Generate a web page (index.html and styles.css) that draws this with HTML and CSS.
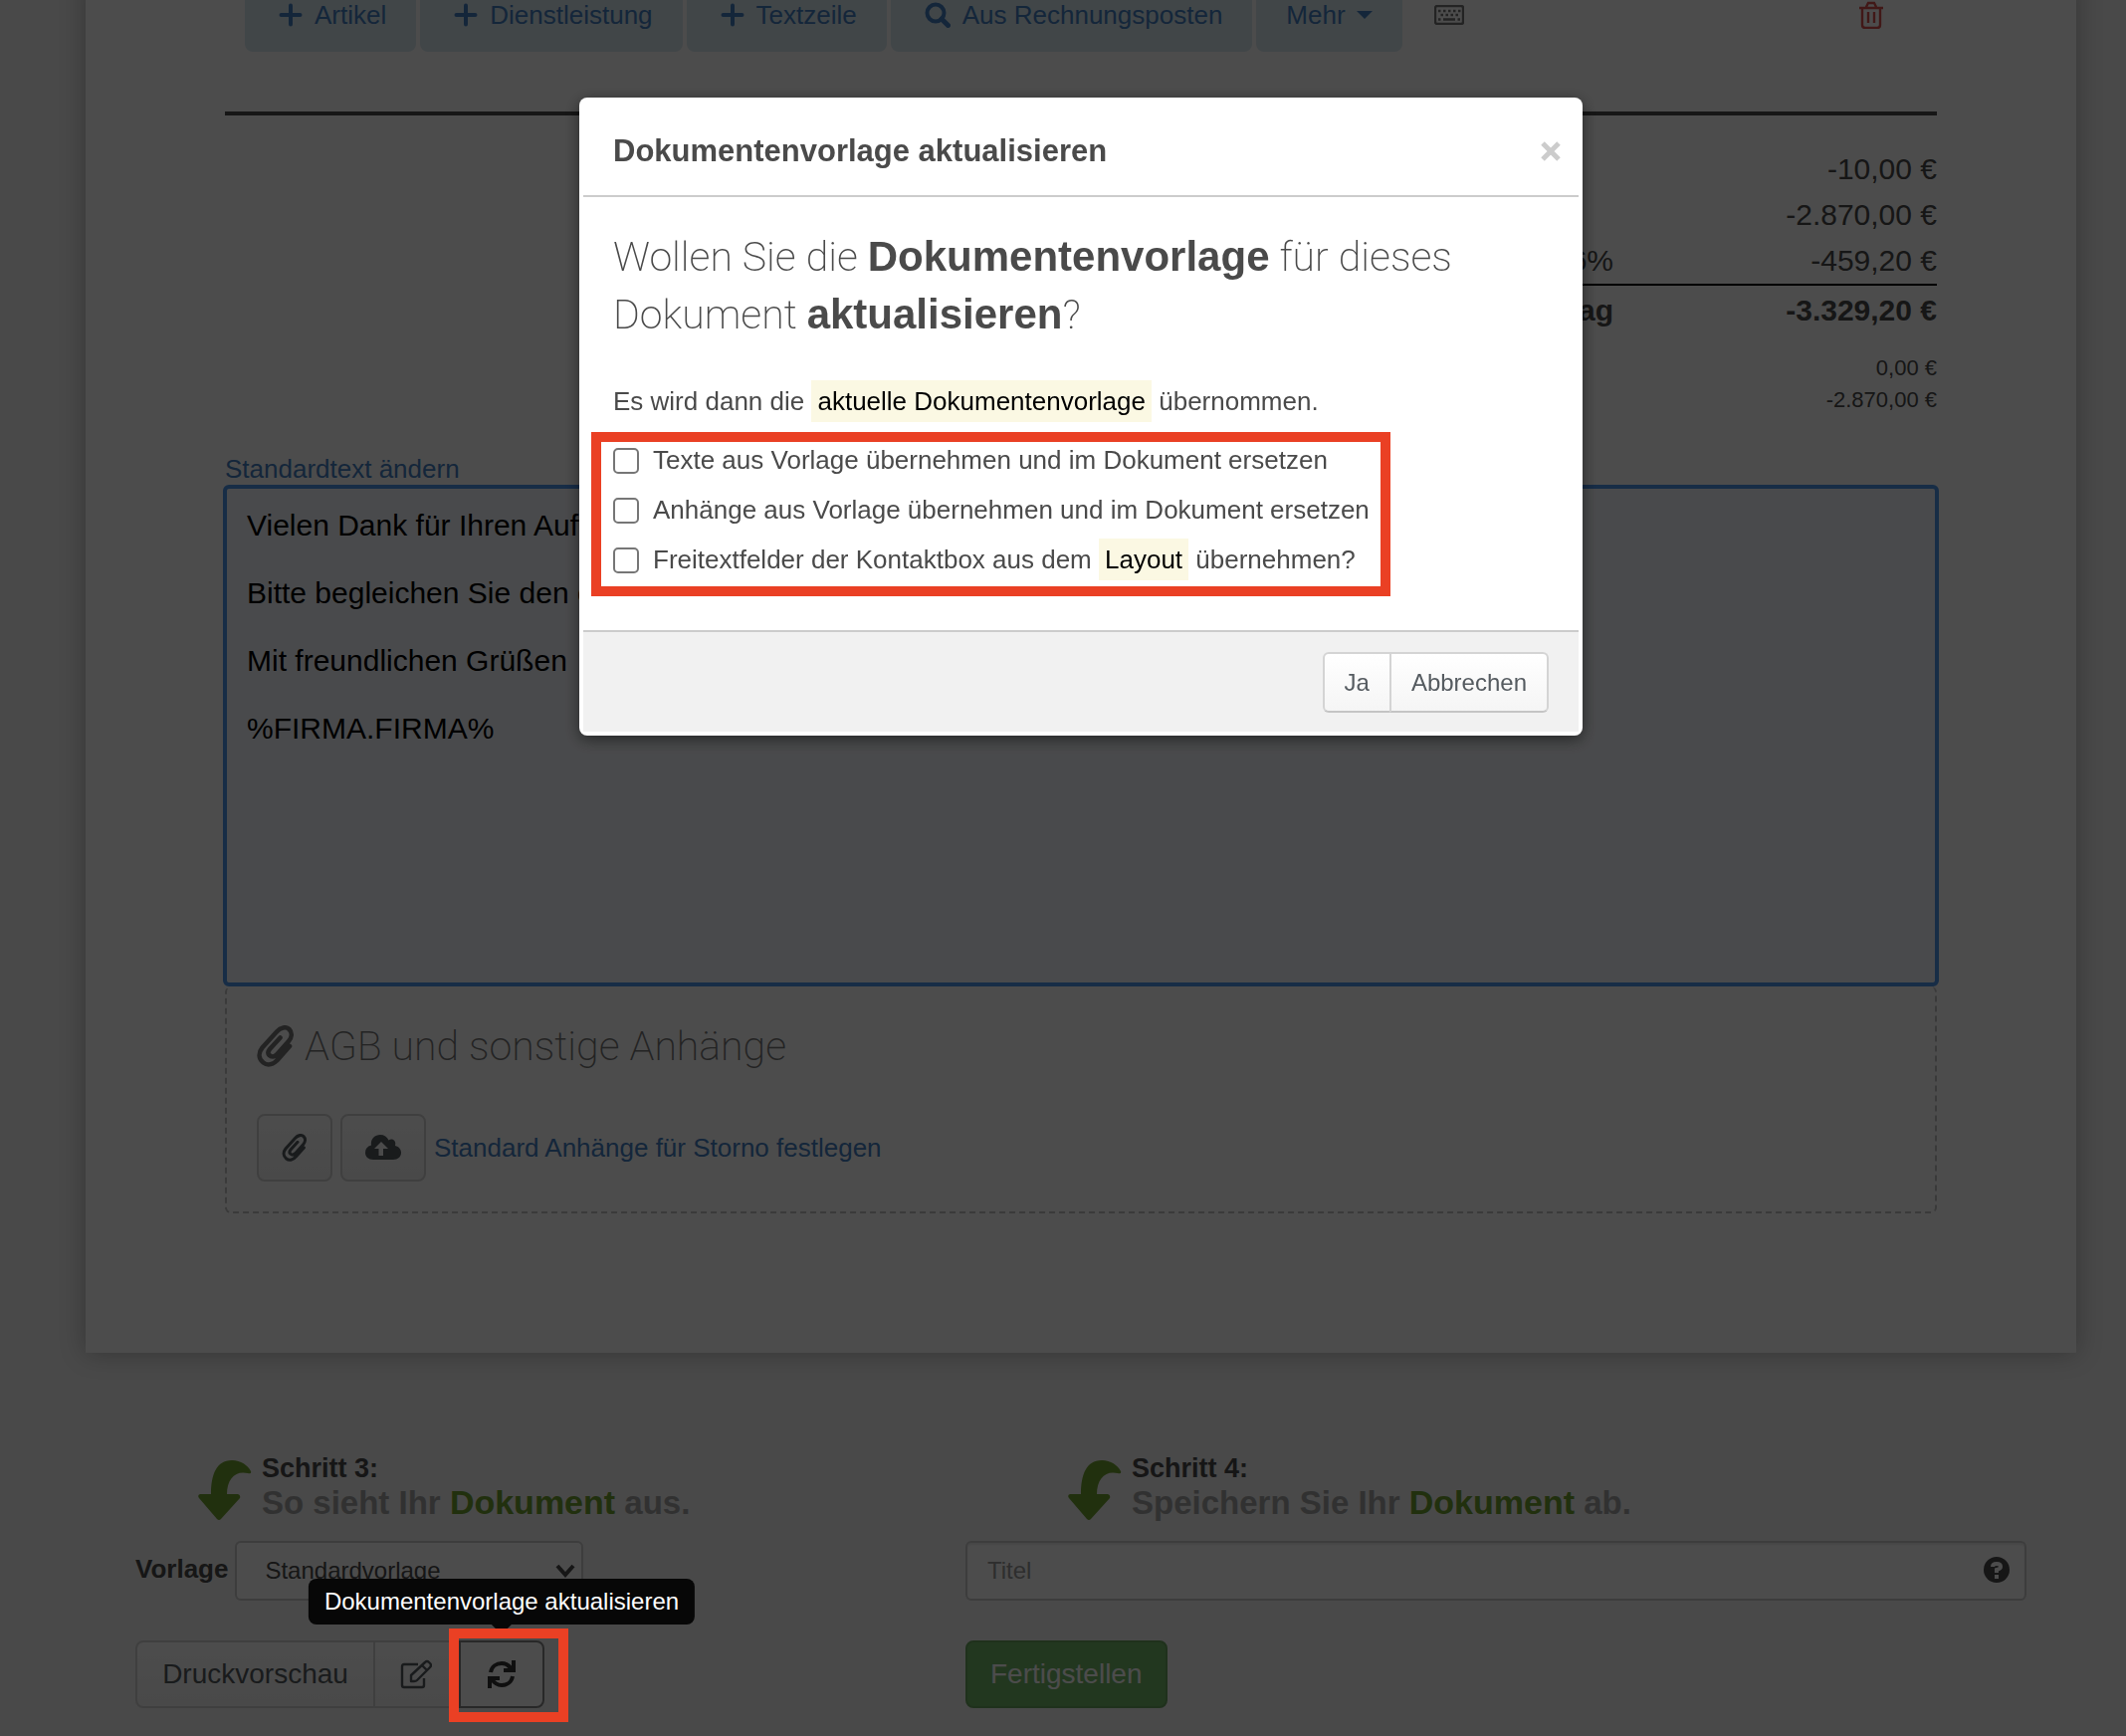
FILE: index.html
```
<!DOCTYPE html>
<html lang="de">
<head>
<meta charset="utf-8">
<meta name="viewport" content="width=device-width, initial-scale=1">
<title>Dokument bearbeiten</title>
<link rel="stylesheet" href="styles.css">
</head>
<body>
<svg class="sprite" aria-hidden="true">
  <symbol id="i-plus" viewBox="0 0 24 24"><path d="M12 2.500V21.500M2.500 12H21.500" fill="none" stroke="currentColor" stroke-width="4" stroke-linecap="round"/></symbol>
  <symbol id="i-search" viewBox="0 0 26 26"><circle cx="11" cy="11" r="8.500" fill="none" stroke="currentColor" stroke-width="4"/><path d="M17 17L23.500 23.500" stroke="currentColor" stroke-width="5" stroke-linecap="round"/></symbol>
  <symbol id="i-clip" viewBox="0 0 38 42"><path fill="none" stroke="currentColor" stroke-width="4.600" stroke-linecap="round" d="M33 21L22 33.500C17 39.500 11 41 6.500 37.500C1.500 33.500 1.500 27.500 5.500 22.500L20 6.500C24 2 29.500 1 32.500 4C36 7.500 35 12.500 32 16L20 29.500C17.500 32 14.500 32 12.500 30C11 28.500 11 26.500 13 24L23.500 12.500"/></symbol>
</svg>

<div class="page">
  <main class="paper">
    <div class="toolbar">
      <button type="button" class="add"><svg class="ico24" aria-hidden="true"><use href="#i-plus"/></svg>Artikel</button>
      <button type="button" class="add"><svg class="ico24" aria-hidden="true"><use href="#i-plus"/></svg>Dienstleistung</button>
      <button type="button" class="add"><svg class="ico24" aria-hidden="true"><use href="#i-plus"/></svg>Textzeile</button>
      <button type="button" class="add"><svg class="ico26" aria-hidden="true"><use href="#i-search"/></svg>Aus Rechnungsposten</button>
      <button type="button" class="add more">Mehr<span class="caret"></span></button>
      <button type="button" class="bare keys" aria-label="Tastenkürzel">
        <svg width="30" height="20" viewBox="0 0 30 20" fill="none" stroke="currentColor" stroke-width="2.400" aria-hidden="true"><rect x="1" y="1" width="28" height="18" rx="2"/><path stroke-dasharray="2.500 2.500" d="M4 6H27M6.500 10H24"/><path d="M4 14.500H6.500M9 14.500H21M23.500 14.500H26"/></svg>
      </button>
      <button type="button" class="bare bin" aria-label="Löschen">
        <svg width="24" height="28" viewBox="0 0 24 28" fill="none" stroke="currentColor" stroke-width="2.400" aria-hidden="true"><path d="M0 7H24M3 7V24Q3 27 6 27H18Q21 27 21 24V7M7 6L9 2H15L17 6M9 11V22M15 11V22"/></svg>
      </button>
    </div>

    <hr class="rule">

    <table class="totals">
      <tbody>
        <tr><th></th><td>-10,00 €</td></tr>
        <tr><th></th><td>-2.870,00 €</td></tr>
        <tr><th>16%</th><td>-459,20 €</td></tr>
        <tr class="sum"><th>Gesamtbetrag</th><td>-3.329,20 €</td></tr>
        <tr class="gap"><td colspan="2"></td></tr>
        <tr class="minor"><th></th><td>0,00 €</td></tr>
        <tr class="minor"><th></th><td>-2.870,00 €</td></tr>
      </tbody>
    </table>

    <a href="#" class="default-text">Standardtext ändern</a>
    <textarea class="closing" aria-label="Schlusstext">Vielen Dank für Ihren Auftrag.

Bitte begleichen Sie den offenen Betrag.

Mit freundlichen Grüßen

%FIRMA.FIRMA%</textarea>

    <section class="files">
      <h2><svg class="clip-lg" aria-hidden="true"><use href="#i-clip"/></svg>AGB und sonstige Anhänge</h2>
      <div class="file-row">
        <button type="button" class="btn clip" aria-label="Anhang wählen"><svg class="clip-sm" aria-hidden="true"><use href="#i-clip"/></svg></button>
        <button type="button" class="btn cloud" aria-label="Anhang hochladen">
          <svg width="36" height="26" viewBox="0 0 36 26" aria-hidden="true"><path fill="currentColor" fill-rule="evenodd" d="M8 25C3 25 0 22 0 18C0 14 2 11.500 6 10.500C5 4 10 0 15 0C19 0 22 2 23.500 5.500C27 3 31.500 6 30 11C34 12 36 15 36 18C36 22 33 25 28 25ZM13.500 21H18V14H23L16 7L9 14H13.500Z"/></svg>
        </button>
        <a href="#">Standard Anhänge für Storno festlegen</a>
      </div>
    </section>
  </main>

  <div class="steps">
    <section class="step">
      <header class="step-head">
        <svg class="arrow" viewBox="0 0 54 60" aria-hidden="true"><path d="M2 34H13C13 15 18 0 34 0C43 0 50 5 53 11Q54 14 50 13C38 10 29 18 29 34H40Q43 35 42 38L23 59Q21 61 19 59L1 38Q-1 35 2 34Z"/></svg>
        <div><p>Schritt 3:</p><h3>So sieht Ihr <strong>Dokument</strong> aus.</h3></div>
      </header>
      <div class="field">
        <label for="tpl">Vorlage</label>
        <div class="select">
          <select id="tpl"><option>Standardvorlage</option></select>
          <svg width="20" height="14" viewBox="0 0 20 14" fill="none" stroke="currentColor" stroke-width="4" aria-hidden="true"><path d="M2 2L10 11L18 2"/></svg>
        </div>
      </div>
      <div class="actions">
        <button type="button" class="btn preview">Druckvorschau</button>
        <button type="button" class="btn edit" aria-label="Vorlage bearbeiten">
          <svg width="32" height="30" viewBox="0 0 32 30" fill="none" stroke="currentColor" stroke-width="2.400" stroke-linejoin="round" aria-hidden="true"><path d="M18 5H4Q2 5 2 7V26Q2 28 4 28H22Q24 28 24 26V19"/><path d="M11 22V16L25 3Q27 1 29 3L30 4Q32 6 30 8L17 21Q16 22 14 22ZM22 6L27 11"/></svg>
        </button>
        <span class="refresh-wrap">
          <button type="button" class="btn refresh" aria-label="Dokumentenvorlage aktualisieren" aria-describedby="tip">
            <svg width="28" height="28" viewBox="0 0 28 28" fill="none" stroke="currentColor" stroke-width="4" aria-hidden="true"><path d="M3 12C4 6 9 3 14 3C19 3 22 6 24 9M26 0V10H16"/><path d="M25 16C24 22 19 25 14 25C9 25 6 22 4 19M2 28V18H12"/></svg>
          </button>
          <span class="tip" role="tooltip" id="tip">Dokumentenvorlage aktualisieren</span>
          <span class="mark mark-button"></span>
        </span>
      </div>
    </section>

    <section class="step save">
      <header class="step-head">
        <svg class="arrow" viewBox="0 0 54 60" aria-hidden="true"><path d="M2 34H13C13 15 18 0 34 0C43 0 50 5 53 11Q54 14 50 13C38 10 29 18 29 34H40Q43 35 42 38L23 59Q21 61 19 59L1 38Q-1 35 2 34Z"/></svg>
        <div><p>Schritt 4:</p><h3>Speichern Sie Ihr <strong>Dokument</strong> ab.</h3></div>
      </header>
      <div class="title-field">
        <input type="text" placeholder="Titel" aria-label="Titel">
        <svg width="26" height="26" viewBox="0 0 26 26" aria-hidden="true"><circle cx="13" cy="13" r="13" fill="#4a4a4a"/><path d="M9 10Q9 7 13 7Q17 7 17 10Q17 12 13 13V16" fill="none" stroke="#fff" stroke-width="4"/><path d="M11 18H15V22H11Z" fill="#fff"/></svg>
      </div>
      <div class="actions"><button type="button" class="done">Fertigstellen</button></div>
    </section>
  </div>
</div>

<div class="backdrop"></div>
<div class="modal-layer">
  <div class="modal" role="dialog" aria-modal="true" aria-labelledby="modal-title">
    <header class="modal-head">
      <h1 id="modal-title">Dokumentenvorlage aktualisieren</h1>
      <button type="button" class="bare close" aria-label="Schließen"><svg width="20" height="20" viewBox="0 0 20 20" aria-hidden="true"><path d="M2 2L18 18M18 2L2 18" stroke="currentColor" stroke-width="5"/></svg></button>
    </header>
    <div class="modal-body">
      <h2>Wollen Sie die <strong>Dokumentenvorlage</strong> für dieses<br>Dokument <strong>aktualisieren</strong>?</h2>
      <p>Es wird dann die <mark>aktuelle Dokumentenvorlage</mark> übernommen.</p>
      <div class="options">
        <label><input type="checkbox"><span>Texte aus Vorlage übernehmen und im Dokument ersetzen</span></label>
        <label><input type="checkbox"><span>Anhänge aus Vorlage übernehmen und im Dokument ersetzen</span></label>
        <label><input type="checkbox"><span>Freitextfelder der Kontaktbox aus dem <mark>Layout</mark> übernehmen?</span></label>
        <span class="mark mark-options"></span>
      </div>
    </div>
    <footer class="modal-foot">
      <button type="button">Ja</button><button type="button">Abbrechen</button>
    </footer>
  </div>
</div>
</body>
</html>
```
FILE: styles.css
```
* { box-sizing: border-box; }

html { height: 100%; }

body {
  margin: 0;
  height: 100%;
  overflow: hidden;
  background: #f3f3f3;
  color: #4a4a4a;
  font: 26px/32px "Liberation Sans", Arial, sans-serif;
}

h1, h2, h3, p { margin: 0; }
button, input, select, textarea { font: inherit; color: inherit; margin: 0; }
a { color: #4580c4; text-decoration: none; }
svg { display: block; flex: none; }
.sprite { position: absolute; width: 0; height: 0; }

.page { padding: 0 50px 30px 86px; }

.paper {
  padding: 0 140px 140px;
  background: #fff;
  box-shadow: 0 0 24px rgba(0, 0, 0, .28);
}

/* Toolbar, scrolled partly out of view */
.toolbar {
  display: flex;
  align-items: center;
  gap: 4px;
  margin-top: -22px;
  padding: 0 54px 0 20px;
}
.add {
  display: flex;
  align-items: center;
  gap: 12px;
  height: 74px;
  padding: 0 30px 0 34px;
  border: 0;
  border-radius: 8px;
  background: #d9e9f1;
  color: #4580c4;
  white-space: nowrap;
}
.more { gap: 11px; padding: 0 30px 0 30px; }
.ico24 { width: 24px; height: 24px; }
.ico26 { width: 26px; height: 26px; }
.caret {
  border: 8px solid transparent;
  border-top-color: currentColor;
  border-bottom: 0;
}
.bare { padding: 0; border: 0; background: none; }
.keys { margin-left: 28px; color: #777; }
.bin { margin-left: auto; color: #d9534f; }

.rule { height: 4px; margin: 60px 0 31px; border: 0; background: #4a4a4a; }

.totals {
  width: 50%;
  margin: 0 0 37px auto;
  border-collapse: collapse;
  font-size: 30px;
  line-height: 46px;
  text-align: right;
}
.totals th, .totals td { padding: 0; height: 46px; font-weight: 400; }
.totals td { width: 325px; }
.totals .sum > * { height: 50px; border-top: 2px solid #000; font-weight: 700; }
.totals .gap td { height: 18px; }
.totals .minor > * { height: 32px; font-size: 22px; line-height: 32px; }

.default-text { display: block; }

.closing {
  display: block;
  width: calc(100% + 4px);
  height: 504px;
  margin: 0 -2px;
  padding: 20px;
  border: 4px solid #4d96ec;
  border-radius: 6px;
  outline: 0;
  resize: none;
  background: #f6f9fd;
  color: #000;
  font-size: 30px;
  line-height: 34px;
}

.files {
  padding: 30px 30px 30px;
  border: 2px dashed #c1c1c1;
  border-top: 0;
  border-radius: 6px;
}
.files h2 {
  display: flex;
  align-items: center;
  gap: 10px;
  margin-bottom: 38px;
  color: #777;
  font: 200 41px/60px Roboto, "Liberation Sans", sans-serif;
}
.clip-lg { width: 38px; height: 42px; }
.clip-sm { width: 26px; height: 28px; }
.file-row { display: flex; align-items: center; gap: 8px; }

.btn {
  display: flex;
  align-items: center;
  justify-content: center;
  height: 68px;
  border: 2px solid #d4d4d4;
  border-radius: 8px;
  background: linear-gradient(#fff, #f5f5f5);
  color: #555b60;
}
.clip { width: 76px; }
.cloud { width: 86px; }

/* Steps below the sheet */
.steps {
  display: grid;
  grid-template-columns: 834fr 1066fr;
  padding: 99px 50px 0;
}
.step-head {
  display: flex;
  gap: 10px;
  margin-bottom: 21px;
  padding-left: 63px;
}
.save .step-head { padding-left: 103px; }
.step-head p { font-size: 27px; font-weight: 700; line-height: 34px; }
.step-head h3 { color: #a6a6a6; font-size: 33px; line-height: 34px; }
.step-head strong { color: #70a030; font-size: 34px; }
.arrow { width: 54px; height: 60px; margin-top: 9px; fill: #70a030; }

.field { display: flex; align-items: center; gap: 7px; height: 60px; }
.field label { padding-bottom: 4px; font-weight: 700; }
.select { position: relative; width: 350px; }
.select select {
  width: 100%;
  height: 60px;
  padding: 0 28px;
  appearance: none;
  border: 2px solid #ccc;
  border-radius: 6px;
  background: #fff;
  font-size: 24px;
}
.select svg { position: absolute; right: 8px; top: 23px; }

.actions { display: flex; margin-top: 40px; }
.preview { width: 241px; border-radius: 8px 0 0 8px; font-size: 28px; }
.edit { width: 86px; margin-left: -2px; border-radius: 0; }
.refresh-wrap { position: relative; }
.refresh { width: 86px; border-color: #888; border-radius: 0 8px 8px 0; background: #fff; color: #333; }

.tip {
  position: absolute;
  z-index: 20;
  bottom: 84px;
  left: 50%;
  transform: translateX(-50%);
  padding: 7px 16px;
  border-radius: 8px;
  background: #070707;
  color: #fff;
  font-size: 24px;
  white-space: nowrap;
}
.tip::after {
  content: "";
  position: absolute;
  top: 100%;
  left: 50%;
  margin-left: -10px;
  border: 10px solid transparent;
  border-top-color: #070707;
  border-bottom: 0;
}

.mark { position: absolute; z-index: 20; border: 10px solid #ea4024; pointer-events: none; }
.mark-button { inset: -12px -24px -14px -10px; }
.mark-options { inset: -4px auto -11px -22px; width: 803px; }

.title-field { position: relative; }
.title-field input {
  display: block;
  width: 100%;
  height: 60px;
  padding: 0 60px 0 20px;
  border: 2px solid #ccc;
  border-radius: 6px;
  background: #fff;
  box-shadow: inset 0 2px 2px rgba(0, 0, 0, .08);
  font-size: 24px;
}
.title-field input::placeholder { color: #999; opacity: 1; }
.title-field svg { position: absolute; right: 17px; top: 16px; }

.done {
  height: 68px;
  padding: 0 23px;
  border: 2px solid #68a45e;
  border-radius: 8px;
  background: #74b76a;
  color: #fff;
  font-size: 28px;
}

.backdrop { position: fixed; z-index: 10; inset: 0; background: rgba(0, 0, 0, .7); }

/* Dialog */
.modal-layer {
  position: fixed;
  z-index: 30;
  top: 0;
  left: 36px;
  right: 0;
  display: flex;
  justify-content: center;
  padding-top: 98px;
}
.modal {
  width: 1008px;
  padding: 4px;
  border-radius: 8px;
  background: #fff;
  box-shadow: 0 4px 16px rgba(0, 0, 0, .5);
}
.modal-head {
  display: flex;
  align-items: center;
  justify-content: space-between;
  height: 96px;
  padding: 6px 18px 0 30px;
  border-bottom: 2px solid #ccc;
}
.modal-head h1 { font-size: 31px; }
.close { color: #ccc; }

.modal-body { padding: 31px 30px 45px; }
.modal-body h2 {
  margin-bottom: 37px;
  font: 200 41px/58px Roboto, "Liberation Sans", sans-serif;
}
.modal-body h2 strong { font: 700 42px/58px "Liberation Sans", sans-serif; }
.modal-body p { height: 42px; line-height: 42px; }
mark { display: inline-block; padding: 0 6px; height: 42px; line-height: 42px; background: #fbf8e3; color: #000; }

.options { position: relative; margin-top: 14px; }
.options label { display: flex; align-items: center; gap: 14px; height: 50px; }
.options label span { padding-bottom: 2px; }
.options input {
  width: 26px;
  height: 26px;
  appearance: none;
  border: 2px solid #767676;
  border-radius: 5px;
  background: #fff;
}

.modal-foot {
  display: flex;
  justify-content: flex-end;
  padding: 20px 30px 19px;
  border-top: 2px solid #ccc;
  background: #f1f1f1;
}
.modal-foot button {
  height: 61px;
  padding: 0 20px;
  border: 2px solid #d4d4d4;
  border-bottom-color: #c4c4c4;
  border-radius: 6px 0 0 6px;
  background: linear-gradient(#fff, #f5f5f5);
  color: #555b60;
  font-size: 24px;
}
.modal-foot button + button { margin-left: -2px; border-radius: 0 6px 6px 0; }
```
